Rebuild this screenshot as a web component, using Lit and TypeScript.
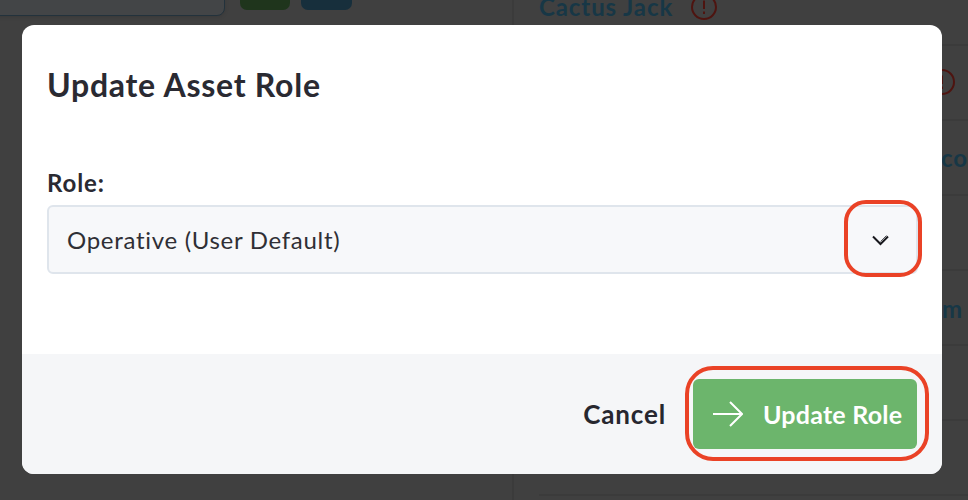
import { LitElement, html, css } from "lit";
import { customElement } from "lit/decorators.js";

@customElement("app-root")
export class AppRoot extends LitElement {
  static styles = css`
    :host { display: block; width: 968px; height: 500px; font-family: Lato, "Liberation Sans", sans-serif; }
    * { box-sizing: border-box; }
    .page { position: relative; width: 968px; height: 500px; overflow: hidden; background: #404040; }
    .bg { position: absolute; }
    .bginput { left: -20px; top: -40px; width: 245px; height: 56px; background: #434547; border: 1px solid #23323c; border-radius: 8px; box-shadow: 0 1px 4px rgba(0,0,0,0.12); }
    .chip1 { left: 240px; top: -20px; width: 50px; height: 30px; border-radius: 7px; background: #1f351c; }
    .chip2 { left: 301px; top: -20px; width: 51px; height: 30px; border-radius: 7px; background: #172f3c; }
    .vline { left: 512px; top: 0; width: 2px; height: 500px; background: #3b3b3b; }
    .hline { left: 539px; width: 429px; height: 2px; background: #3b3b3b; }
    .link { font-weight: 700; font-size: 24px; color: #173746; white-space: nowrap; letter-spacing: 0.9px; }
    .alert { display: block; }
    .modal { position: absolute; left: 22px; top: 25px; width: 920px; height: 449px; border-radius: 12px; background: #fff; overflow: hidden; display: flex; flex-direction: column; }
    .body { flex: 1; padding: 42px 25px 0; color: #2a2a32; }
    h2 { margin: 0; font-size: 32px; line-height: 36px; font-weight: 700; letter-spacing: 0.75px; }
    label { display: block; margin-top: 66px; font-size: 24px; line-height: 28px; font-weight: 700; letter-spacing: 0.9px; }
    .select { margin-top: 8px; height: 69px; width: 871px; display: flex; align-items: center; justify-content: space-between; padding: 0 27px 0 18px; border: 2px solid #dfe5ec; border-radius: 6px; background: #f7f8fa; font-size: 24px; letter-spacing: 0.7px; color: #2f2f35; }
    .select svg { display: block; margin-top: 1px; }
    .footer { height: 120px; background: #f5f6f8; display: flex; align-items: center; justify-content: flex-end; padding: 0 25px 0 0; gap: 27px; }
    .cancel { font-size: 26px; font-weight: 700; letter-spacing: 0.85px; color: #27272f; }
    .btn { width: 224px; height: 70px; display: flex; align-items: center; gap: 20px; padding-left: 20px; border-radius: 6px; background: #6cb56c; color: #fff; font-size: 25px; font-weight: 700; letter-spacing: 0.22px; }
    .ring { position: absolute; border: 4px solid #ea4226; }
    .ring1 { left: 844px; top: 200px; width: 78px; height: 77px; border-radius: 22px; }
    .ring2 { left: 685px; top: 366px; width: 244px; height: 95px; border-radius: 28px; }
  `;

  private alertIcon(left: number, top: number) {
    return html`<svg class="bg alert" style="left:${left}px;top:${top}px" width="26" height="26" viewBox="0 0 26 26" fill="none" stroke="#4e1410" stroke-width="2"><circle cx="13" cy="13" r="12"/><path d="M13 6.5V15M13 17.5V20"/></svg>`;
  }

  render() {
    return html`
      <div class="page">
        <div class="bg bginput"></div>
        <div class="bg chip1"></div>
        <div class="bg chip2"></div>
        <div class="bg vline"></div>
        ${[44, 119, 194, 269, 344, 419, 494].map(
          (t) => html`<div class="bg hline" style="top:${t}px"></div>`
        )}
        <div class="bg link" style="left:539px;top:-8px">Cactus Jack</div>
        ${this.alertIcon(691, -6)}
        ${this.alertIcon(929, 69)}
        <div class="bg link" style="left:941px;top:143px">con</div>
        <div class="bg link" style="left:942px;top:294px">m</div>
        <div class="modal">
          <div class="body">
            <h2>Update Asset Role</h2>
            <label>Role:</label>
            <div class="select">
              <span>Operative (User Default)</span>
              <svg width="17" height="12" viewBox="0 0 17 12" fill="none" stroke="#17171c" stroke-width="2"><path d="M1 2.5 8.5 10 16 2.5"/><path d="M8.5 7.5 14.5 1.5" stroke-width="1" stroke="#55555a"/></svg>
            </div>
          </div>
          <div class="footer">
            <span class="cancel">Cancel</span>
            <div class="btn">
              <svg width="30" height="26" viewBox="0 0 30 26" fill="none" stroke="#fff" stroke-width="2"><path d="M0 13H29M17 1 29 13 17 25"/></svg>
              <span>Update Role</span>
            </div>
          </div>
        </div>
        <div class="ring ring1"></div>
        <div class="ring ring2"></div>
      </div>
    `;
  }
}
